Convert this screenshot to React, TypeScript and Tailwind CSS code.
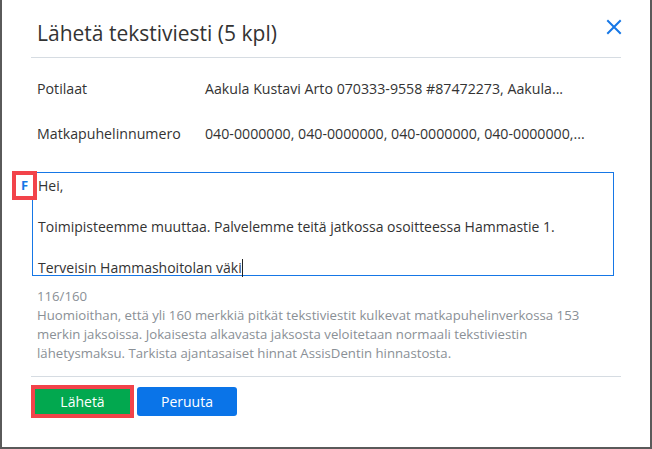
import React from "react";

export default function App() {
  const font = { fontFamily: '"Open Sans", "Noto Sans", Arial, sans-serif' };
  return (
    <div
      className="w-[652px] h-[449px] bg-white border-l-2 border-r-2 border-b-2 border-[#5a5a5a] flex flex-col px-[29px] text-[#333333] relative"
      style={font}
    >
      <div className="h-[58px] flex items-center justify-between border-b border-[#d6dce2] shrink-0">
        <h1 className="pl-[6px] pt-[10px] text-[21px] leading-none text-[#333333]">Lähetä tekstiviesti (5 kpl)</h1>
        <svg width="16" height="16" viewBox="0 0 16 16" className="mr-[-1px] mt-[-4px]">
          <path d="M2 2 L14 14 M14 2 L2 14" stroke="#1677e6" strokeWidth="2" strokeLinecap="square" />
        </svg>
      </div>

      <div className="flex flex-col pl-[6px] pt-[20px] text-[14.2px]">
        <div className="flex h-[22px] items-center">
          <div className="w-[168px]">Potilaat</div>
          <div>Aakula Kustavi Arto 070333-9558 #87472273, Aakula...</div>
        </div>
        <div className="flex h-[22px] items-center mt-[23px]">
          <div className="w-[168px]">Matkapuhelinnumero</div>
          <div>040-0000000, 040-0000000, 040-0000000, 040-0000000,...</div>
        </div>
      </div>

      <div className="relative mt-[27px] ml-[1px] w-[582px] h-[104px] border border-[#1677e6] pl-[5px] pt-[3px] text-[14px] leading-[20.5px] text-[#333333]">
        <div>Hei,</div>
        <div>&nbsp;</div>
        <div>Toimipisteemme muuttaa. Palvelemme teitä jatkossa osoitteessa Hammastie 1.</div>
        <div>&nbsp;</div>
        <div className="flex items-center">
          <span>Terveisin Hammashoitolan väki</span>
          <span className="inline-block w-[1px] h-[18px] bg-[#222222]" />
        </div>
        <div className="absolute left-[-21px] top-[-2px] w-[25px] h-[29px] border-4 border-[#f2434a] bg-white flex items-center justify-center">
          <span className="text-[13px] font-bold text-[#1677e6] leading-none">F</span>
        </div>
      </div>

      <div className="pl-[6px] pt-[11px] text-[13.2px] leading-[19px] text-[#8a9096]">
        <div>116/160</div>
        <div className="w-[570px]">
          Huomioithan, että yli 160 merkkiä pitkät tekstiviestit kulkevat matkapuhelinverkossa 153 merkin jaksoissa. Jokaisesta alkavasta jaksosta veloitetaan normaali tekstiviestin lähetysmaksu. Tarkista ajantasaiset hinnat AssisDentin hinnastosta.
        </div>
      </div>

      <div className="mt-[13px] border-t border-[#d6dce2] pt-[8px] flex items-start gap-[3px]">
        <div className="w-[103px] h-[33px] border-4 border-[#f2434a] bg-[#02a84f] flex items-center justify-center text-white text-[14px]">
          Lähetä
        </div>
        <div className="mt-[2px] w-[100px] h-[29px] rounded-[3px] bg-[#0a74e8] flex items-center justify-center text-white text-[14px]">
          Peruuta
        </div>
      </div>
    </div>
  );
}
